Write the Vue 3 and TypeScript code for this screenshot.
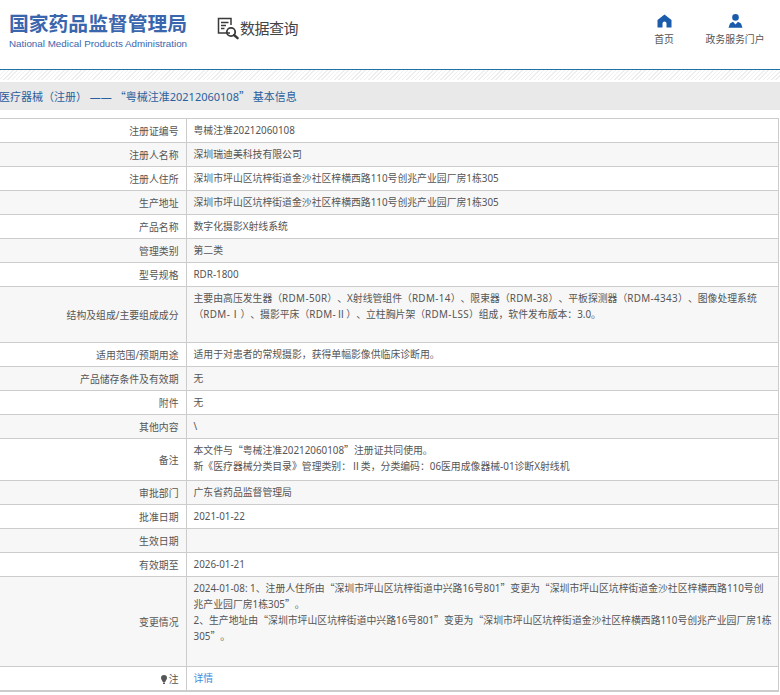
<script setup lang="ts">
interface Row { label: string; lines: string[]; h?: number; note?: boolean; link?: boolean }
const rows: Row[] = [
  { label: '注册证编号', lines: ['粤械注准20212060108'] },
  { label: '注册人名称', lines: ['深圳瑞迪美科技有限公司'] },
  { label: '注册人住所', lines: ['深圳市坪山区坑梓街道金沙社区梓横西路110号创兆产业园厂房1栋305'] },
  { label: '生产地址', lines: ['深圳市坪山区坑梓街道金沙社区梓横西路110号创兆产业园厂房1栋305'] },
  { label: '产品名称', lines: ['数字化摄影X射线系统'] },
  { label: '管理类别', lines: ['第二类'] },
  { label: '型号规格', lines: ['RDR-1800'] },
  { label: '结构及组成/主要组成成分', lines: ['主要由高压发生器（RDM-50R）、X射线管组件（RDM-14）、限束器（RDM-38）、平板探测器（RDM-4343）、图像处理系统', '（RDM-Ⅰ）、摄影平床（RDM-Ⅱ）、立柱胸片架（RDM-LSS）组成，软件发布版本：3.0。'], h: 56 },
  { label: '适用范围/预期用途', lines: ['适用于对患者的常规摄影，获得单幅影像供临床诊断用。'] },
  { label: '产品储存条件及有效期', lines: ['无'] },
  { label: '附件', lines: ['无'] },
  { label: '其他内容', lines: ['\\'] },
  { label: '备注', lines: ['本文件与“粤械注准20212060108”注册证共同使用。', '新《医疗器械分类目录》管理类别：Ⅱ类，分类编码：06医用成像器械-01诊断X射线机'], h: 42 },
  { label: '审批部门', lines: ['广东省药品监督管理局'] },
  { label: '批准日期', lines: ['2021-01-22'] },
  { label: '生效日期', lines: [''] },
  { label: '有效期至', lines: ['2026-01-21'] },
  { label: '变更情况', lines: ['2024-01-08: 1、注册人住所由“深圳市坪山区坑梓街道中兴路16号801”变更为“深圳市坪山区坑梓街道金沙社区梓横西路110号创', '兆产业园厂房1栋305”。', '2、生产地址由“深圳市坪山区坑梓街道中兴路16号801”变更为“深圳市坪山区坑梓街道金沙社区梓横西路110号创兆产业园厂房1栋', '305”。'], h: 90 },
  { label: '注', lines: ['详情'], note: true, link: true },
]
const crumb = '医疗器械（注册） —— “粤械注准20212060108” 基本信息'
// Curly quotes come from the CJK face to keep their full-width box;
// model numbers are set slightly looser, as in the reference.
const parts = (s: string): string[] => s.split(/([“”]|RDM-[^）]+)/).filter(Boolean)
const isQuote = (s: string): boolean => s === '“' || s === '”'
const isModel = (s: string): boolean => s.startsWith('RDM-')
</script>

<template>
  <div class="page" lang="zh-CN">
    <header class="top">
      <div class="brand">
        <div class="cn">国家药品监督管理局</div>
        <div class="en">National Medical Products Administration</div>
      </div>
      <div class="query">
        <svg width="24" height="24" viewBox="0 0 24 24" fill="none" stroke="#3a3a3a">
          <path d="M14 17H2.5V2.5H15V9" stroke-width="1.5" />
          <path d="M5 6.5h7.5M5 9.5h5M5 12.5h3.5" stroke-width="1.3" />
          <circle cx="15" cy="16" r="4.2" stroke-width="1.8" />
          <path d="M18 19l3.6 3.2" stroke-width="2.4" stroke-linecap="round" />
        </svg>
        <span>数据查询</span>
      </div>
      <nav class="nav">
        <div class="nav-item home">
          <svg width="15" height="14" viewBox="0 0 15 14" fill="#1a5cab">
            <path d="M7.5 0.5L0.5 6V13.5H5.5V9.5a2 2 0 0 1 4 0V13.5H14.5V6Z" />
          </svg>
          <span>首页</span>
        </div>
        <div class="nav-item portal">
          <svg width="15" height="14" viewBox="0 0 15 14" fill="#1a5cab">
            <circle cx="7.5" cy="3.4" r="3.3" />
            <path d="M0.5 13.8L2 9.4L5 7.7L7.5 10.4L10 7.7L13 9.4L14.5 13.8Z" />
          </svg>
          <span>政务服务门户</span>
        </div>
      </nav>
    </header>
    <div class="rule"></div>
    <div class="crumb">
      <template v-for="(p, k) in parts(crumb)" :key="k"><span v-if="isQuote(p)" class="q">{{ p }}</span><template v-else>{{ p }}</template></template>
    </div>
    <table class="info">
      <tbody>
        <tr v-for="(r, i) in rows" :key="r.label" :class="{ alt: i % 2 === 1 }" :style="r.h ? { height: r.h + 'px' } : undefined">
          <th>
            <svg v-if="r.note" class="bulb" width="6" height="9" viewBox="0 0 6 9" fill="#555">
              <path d="M3 0a3 3 0 0 1 3 3c0 1.6-1.4 2.4-1.8 4H1.8C1.4 5.4 0 4.6 0 3a3 3 0 0 1 3-3Z" />
              <path d="M2 7.6h2V9H2Z" />
            </svg>{{ r.label }}
          </th>
          <td :class="{ link: r.link }">
            <div v-for="(l, j) in r.lines" :key="j" class="line"><template v-for="(p, k) in parts(l)" :key="k"><span v-if="isQuote(p)" class="q">{{ p }}</span><span v-else-if="isModel(p)" class="model">{{ p }}</span><template v-else>{{ p }}</template></template></div>
          </td>
        </tr>
      </tbody>
    </table>
  </div>
</template>

<style>
body { margin: 0; background: #fff; }
</style>

<style scoped>
.page {
  width: 780px;
  font-family: "Noto Sans", "Noto Sans CJK SC", sans-serif;
  font-size: 9.85px;
  color: #555;
  overflow: hidden;
  text-spacing-trim: space-all;
}
.q { font-family: "Noto Sans CJK SC", sans-serif; }
.model { letter-spacing: 0.35px; }
.line { white-space: nowrap; min-height: 16px; }
.top { height: 69px; display: flex; align-items: flex-start; }
.brand { margin: 12px 0 0 9px; width: 179px; }
.cn {
  font-size: 19.8px;
  line-height: 24px;
  font-weight: 700;
  color: #3a66ad;
  white-space: nowrap;
}
.en {
  font-family: "Liberation Sans", sans-serif;
  font-size: 9.8px;
  line-height: 14px;
  margin-top: 1px;
  color: #3a66ad;
  white-space: nowrap;
}
.query { display: flex; align-items: center; margin: 16px 0 0 28px; color: #444; font-size: 15px; line-height: 24px; }
.query span { letter-spacing: -0.5px; }
.nav { margin-left: auto; display: flex; }
.nav-item { display: flex; flex-direction: column; align-items: center; margin-top: 14px; gap: 4px; line-height: 14px; white-space: nowrap; }
.home { width: 20px; margin-right: 31px; }
.portal { width: 60px; margin-right: 15px; }
.rule {
  height: 10px;
  border-top: 1px solid #2071a8;
  background: repeating-linear-gradient(135deg, #eee 0 1px, #fff 1px 3px);
}
.crumb {
  margin-top: 2px;
  height: 28px;
  line-height: 28px;
  background: #e9e9e9;
  color: #2a5f9e;
  font-size: 11px;
  white-space: nowrap;
  margin-bottom: 8px;
  text-indent: -1px;
}
.info {
  width: 779px;
  border-collapse: collapse;
  table-layout: fixed;
  border-top: 1px solid #ccc;
  border-right: 1px solid #ccc;
  border-bottom: 2px solid #ccc;
}
.info tr { height: 24px; border-bottom: 1px solid #ccc; }
.info tr.alt { background: #f7f7f7; }
.info th {
  width: 186px;
  box-sizing: border-box;
  padding: 0 7px 0 0;
  text-align: right;
  font-weight: 400;
  border-right: 1px solid #ccc;
  vertical-align: middle;
}
.info td { padding: 3px 6px 4px 7px; line-height: 16px; vertical-align: top; }
.link { color: #3f8de0; }
.bulb { margin-right: 2px; vertical-align: -1px; }
</style>
